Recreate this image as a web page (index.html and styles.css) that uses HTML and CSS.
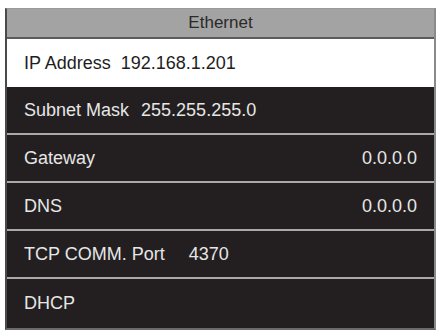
FILE: index.html
```html
<!DOCTYPE html>
<html>
<head>
<meta charset="utf-8">
<link rel="stylesheet" href="styles.css">
</head>
<body>
<div class="panel">
  <div class="header">Ethernet</div>
  <div class="row selected"><span class="label">IP Address</span><span class="val">192.168.1.201</span></div>
  <div class="row"><span class="label">Subnet Mask</span><span class="val">255.255.255.0</span></div>
  <div class="row sep"><span class="label">Gateway</span><span class="val right">0.0.0.0</span></div>
  <div class="row sep"><span class="label">DNS</span><span class="val right">0.0.0.0</span></div>
  <div class="row sep"><span class="label">TCP COMM. Port</span><span class="val wide">4370</span></div>
  <div class="row sep last"><span class="label">DHCP</span></div>
</div>
</body>
</html>
```

FILE: styles.css
```css
html, body {
  margin: 0;
  padding: 0;
  background: #ffffff;
}
body {
  padding: 8px 0 0 5px;
  font-family: "Liberation Sans", Arial, sans-serif;
}
.panel {
  width: 427px;
  display: flex;
  flex-direction: column;
  border-left: 2px solid #4a4a4a;
  border-top: 1px solid #9a9a9a;
  border-right: 2px solid #8a8a8a;
  border-bottom: 2px solid #6a6a6a;
  background: #231f20;
}
.header {
  height: 28px;
  background: #a3a3a3;
  color: #2a2a2a;
  font-size: 17px;
  display: flex;
  align-items: center;
  justify-content: center;
  border-bottom: 2px solid #5c5c5c;
}
.row {
  height: 46px;
  display: flex;
  align-items: center;
  padding: 0 17px 0 17px;
  color: #e6e6e6;
  font-size: 18px;
  background: #231f20;
}
.row.selected {
  height: 48px;
  background: #ffffff;
  color: #1e1e1e;
}
.row.sep {
  border-top: 2px solid #a9a9a9;
}
.row.last {
  height: 49px;
}
.val {
  margin-left: 10px;
}
.row:nth-child(3) .val {
  margin-left: 12px;
}
.val.right {
  margin-left: auto;
}
.val.wide {
  margin-left: 24px;
}
```
